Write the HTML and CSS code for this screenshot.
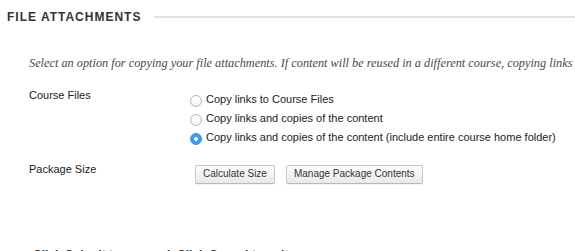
FILE: index.html
```html
<!DOCTYPE html>
<html lang="en">
<head>
  <meta charset="UTF-8">
  <meta name="viewport" content="width=device-width, initial-scale=1.0">
  <title>Copy Course - File Attachments</title>
  <link rel="stylesheet" href="styles.css">
</head>
<body>
  <div class="step">
    <h2 class="step-title"><span>File Attachments</span></h2>

    <p class="step-help">Select an option for copying your file attachments. If content will be reused in a different course, copying links and copies of the content is recommended.</p>

    <ol class="fields">
      <li class="field">
        <div class="field-label">Course Files</div>
        <div class="field-control radios">
          <label class="radio-row"><input type="radio" name="courseFiles"> Copy links to Course Files</label>
          <label class="radio-row"><input type="radio" name="courseFiles"> Copy links and copies of the content</label>
          <label class="radio-row"><input type="radio" name="courseFiles" checked> Copy links and copies of the content (include entire course home folder)</label>
        </div>
      </li>
      <li class="field field-package">
        <div class="field-label">Package Size</div>
        <div class="field-control buttons">
          <button type="button">Calculate Size</button>
          <button type="button">Manage Package Contents</button>
        </div>
      </li>
    </ol>

    <p class="submit-note">Click Submit to proceed. Click Cancel to quit.</p>
  </div>
</body>
</html>
```

FILE: styles.css
```css
/* Global Styles */
* {
  margin: 0;
  padding: 0;
  box-sizing: border-box;
}

body {
  background: #fff;
  color: #222;
  font-family: 'Liberation Sans', Arial, sans-serif;
  overflow: hidden;
}

.step {
  padding-top: 10px;
}

/* Step heading with rule */
.step-title {
  display: flex;
  align-items: center;
  padding-left: 7px;
  font-size: 12px;
  line-height: 14px;
  font-weight: bold;
  letter-spacing: 1px;
  text-transform: uppercase;
  color: #333;
}

.step-title::after {
  content: "";
  flex: 1;
  height: 2px;
  margin-left: 13px;
  background-color: #e1e1e1;
}

.step-help {
  margin: 31px 0 0 29px;
  font-family: 'Liberation Serif', Georgia, serif;
  font-style: italic;
  font-size: 12.3px;
  line-height: 16px;
  color: #4a4a4a;
  white-space: nowrap;
}

/* Fields */
.fields {
  list-style: none;
  margin: 15px 0 0 29px;
}

.field {
  display: flex;
}

.field-label {
  width: 161px;
  font-size: 11px;
  line-height: 19px;
  color: #222;
}

.radios {
  padding-top: 4px;
}

.radio-row {
  display: flex;
  align-items: flex-start;
  font-size: 11px;
  line-height: 19px;
  white-space: nowrap;
}

.radio-row input {
  appearance: none;
  -webkit-appearance: none;
  width: 12px;
  height: 12px;
  margin: 5px 4px 0 0;
  border: 1px solid #b4b4b4;
  border-radius: 50%;
  background: linear-gradient(#fff, #f3f3f3);
}

.radio-row input:checked {
  border-color: #3a8ee6;
  background: radial-gradient(circle, #fff 0 1.6px, #3d9bfc 2.2px);
}

.field-package {
  margin-top: 13px;
}

.buttons {
  display: flex;
  gap: 11px;
  padding: 5px 0 0 5px;
}

.buttons button {
  height: 19px;
  padding: 1px 7px 2px;
  font-family: 'Liberation Sans', Arial, sans-serif;
  font-size: 10px;
  line-height: 14px;
  color: #333;
  border: 1px solid #c9c9c9;
  border-bottom-color: #b8b8b8;
  border-radius: 2px;
  background: linear-gradient(#fdfdfd, #e9e9e9);
  box-shadow: 0 1px 1px rgba(0, 0, 0, 0.06);
}

.submit-note {
  margin: 64px 0 0 33px;
  font-size: 12px;
  line-height: 14px;
  font-weight: bold;
  color: #333;
}
```
